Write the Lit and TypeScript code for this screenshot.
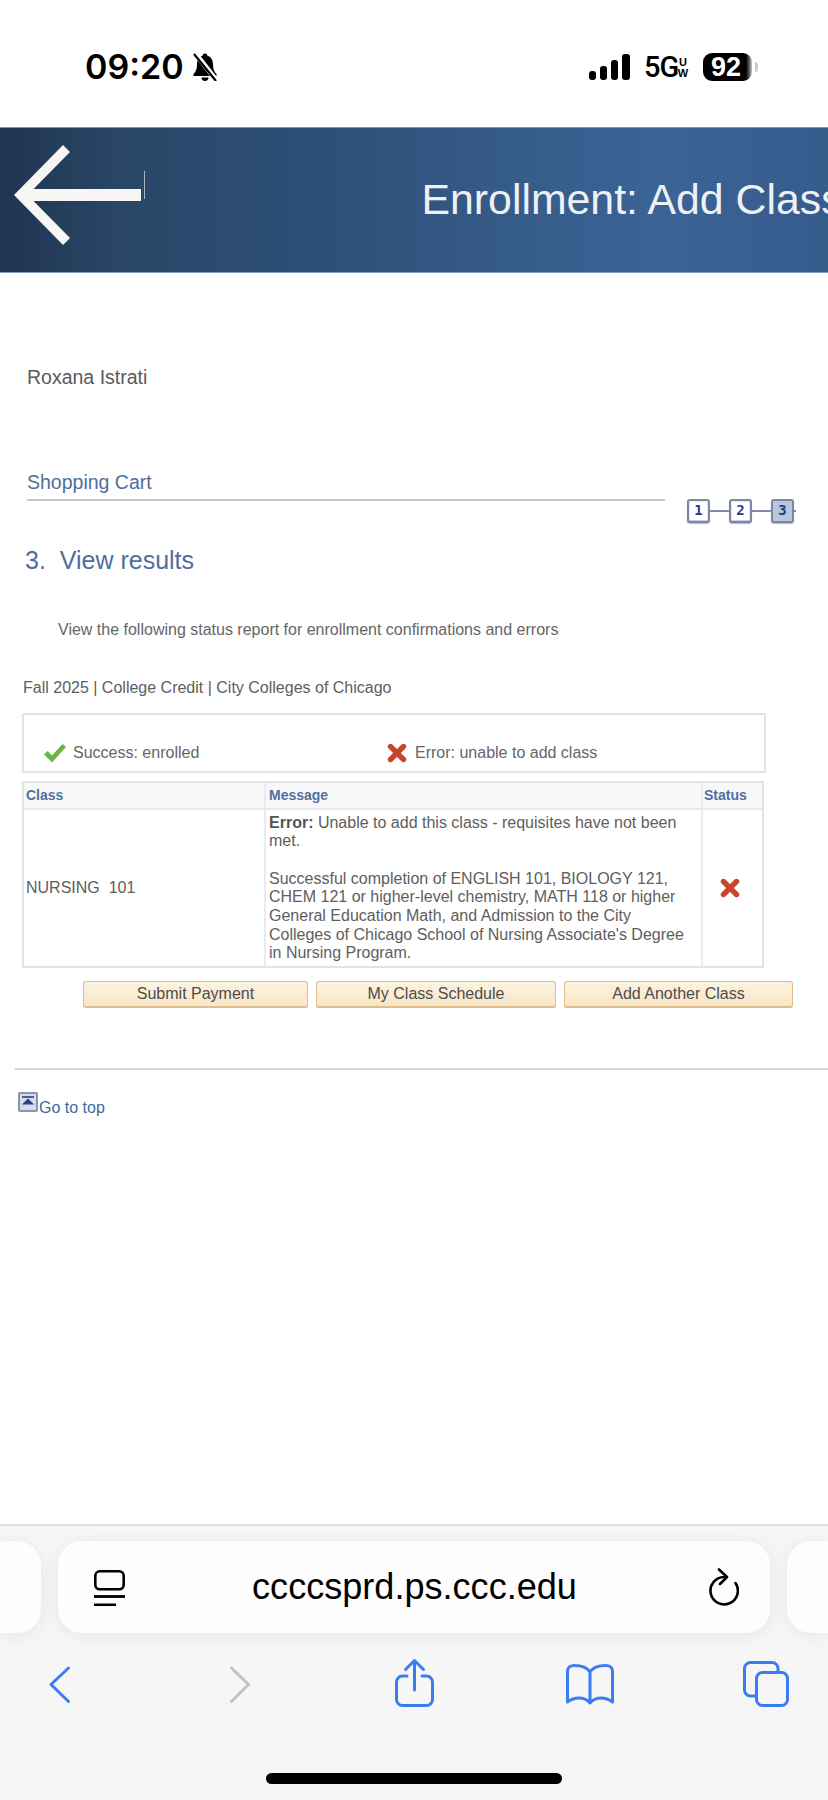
import { LitElement, html, css } from "lit";
import { customElement } from "lit/decorators.js";

const cross = html`<svg class="x" viewBox="0 0 20 20"><path d="M3.5 3.5 16.5 16.5M16.5 3.5 3.5 16.5" fill="none" stroke="#c8452e" stroke-width="5.4" stroke-linecap="round"/></svg>`;

@customElement("app-root")
export class AppRoot extends LitElement {
  static styles = css`
    :host { display: block; }
    * { box-sizing: border-box; }
    .page { width: 828px; height: 1800px; display: flex; flex-direction: column; overflow: hidden; background: #fff; font-family: "Liberation Sans", Arial, sans-serif; color: #555; }

    .status { height: 127px; flex: none; display: flex; align-items: flex-start; padding: 53px 0 0 85px; color: #000; }
    .time { font-family: Inter, sans-serif; font-weight: 600; font-size: 34px; line-height: 28px; width: 106px; }
    .bell { width: 28px; height: 28px; }
    .signal { width: 41px; height: 26px; margin: 1px 0 0 370px; }
    .net { margin-left: 14px; display: flex; height: 28px; }
    .fiveg { font-family: Roboto, sans-serif; font-weight: 500; font-size: 29px; line-height: 29px; letter-spacing: -1px; width: 33px; white-space: nowrap; }
    .uw { display: flex; flex-direction: column; font-weight: 700; font-size: 11px; line-height: 11px; padding: 4px 0 0 1px; width: 11px; align-items: center; }
    .batt { margin-left: 15px; width: 49px; height: 28px; background: linear-gradient(90deg, #000 88%, #666 95%, #ccc 100%); border-radius: 9px; color: #fff; font-weight: 700; font-size: 27px; line-height: 28px; text-align: center; padding-right: 3px; }
    .cap { width: 3px; height: 10px; margin: 9px 0 0 3px; background: #ccc; border-radius: 0 3px 3px 0; }

    .band { height: 146px; flex: none; display: flex; overflow: hidden; white-space: nowrap; background: linear-gradient(90deg, #1f3550 0, #294666 120px, #2c4e75 300px, #375d8b 540px, #3b6395 660px, #365c8c 828px); border-top: 1px solid #7f95b3; border-bottom: 1px solid #7f9cc4; padding-left: 14px; }
    .arrow { flex: none; width: 131px; height: 100px; margin-top: 17px; }
    .band h1 { margin: 0 0 0 276.500px; font-weight: 400; font-size: 42.800px; line-height: 48px; padding-top: 47px; color: #edf1f6; }

    .name { margin: 92px 0 0 27px; height: 24px; font-size: 19.500px; line-height: 24px; color: #5a5a5a; }
    .sect { margin: 81px 0 0 27px; display: flex; align-items: flex-start; }
    .sect-title { width: 638px; height: 31px; border-bottom: 2px solid #c8c8ca; font-size: 19.500px; line-height: 24px; color: #4f6e9d; }
    .steps { margin: 29px 0 0 22px; display: flex; align-items: center; }
    .step { width: 23px; height: 24px; border: 2px solid #7c86a9; border-radius: 3px; background: #fff; color: #2c3b80; font: 700 14px/19px "DejaVu Sans Mono", monospace; text-align: center; box-shadow: inset 0 -1px 0 #c9cfe0, inset 0 0 0 1px #e6e9f2, 0 1px 1px #b4bacd; }
    .step.on { background: #b7c7dc; box-shadow: 0 1px 1px #b4bacd; }
    .link { width: 19px; height: 2px; background: #7f89ab; }
    .link.end { width: 2px; }
    h2 { margin: 22px 0 0 25px; height: 30px; font-weight: 400; font-size: 25px; line-height: 30px; color: #4f6e9d; white-space: pre; }
    .desc { margin: 45px 0 0 58px; height: 20px; font-size: 16px; line-height: 20px; color: #666; }
    .term { margin: 38px 0 0 23px; height: 20px; font-size: 16px; line-height: 20px; color: #5e5e5e; }

    .legend { margin: 15px 0 0 22px; width: 744px; height: 60px; border: 2px solid #e0e3ea; display: flex; align-items: flex-end; padding: 0 0 8px 20px; font-size: 16px; line-height: 20px; color: #666; }
    .legend .item { display: flex; align-items: center; gap: 7px; }
    .legend .item:first-child { width: 343px; }
    .legend .item + .item { gap: 8px; }
    .check { width: 22px; height: 20px; flex: none; }
    .x { width: 20px; height: 20px; flex: none; }

    .tbl { margin: 8px 0 0 22px; width: 742px; height: 187px; border: 2px solid #e0e3ea; display: grid; grid-template-columns: 240px 437px 1fr; grid-template-rows: 27px 1fr; font-size: 16px; color: #5e5e5e; }
    .th { background: #f8f8f9; border-bottom: 2px solid #e6e8ed; font-weight: 700; font-size: 14px; line-height: 25px; color: #51709e; padding-left: 2px; }
    .td { display: flex; align-items: center; padding-left: 2px; white-space: pre; }
    .th + .th, .td + .td { border-left: 2px solid #e9ebf0; padding-left: 3px; }
    .th:nth-child(3) { padding-left: 1px; }
    .msg { display: block; padding: 3.500px 12px 0 3px; white-space: normal; line-height: 18.700px; }
    .msg p { margin: 0 0 18.700px; }
    .msg p:last-child { margin: 0; }
    .msg b { color: #555; }
    .td.st { justify-content: center; padding: 0 5px 1px 0; }

    .btns { margin: 13px 0 0 83px; display: flex; gap: 8px; }
    .btn { height: 27px; border: 1px solid #e0bd8c; border-bottom-width: 2px; border-radius: 3px; background: linear-gradient(180deg, #fbf3e0, #f9e6c6); font-size: 16px; line-height: 23px; text-align: center; color: #4d4d4d; }
    .b1 { width: 225px; } .b2 { width: 240px; } .b3 { width: 229px; }

    .sep { margin: 60px 0 0 15px; height: 2px; background: #d6d6d8; flex: none; }
    .top { margin: 22px 0 0 18px; display: flex; align-items: flex-start; }
    .topic { width: 20px; height: 20px; flex: none; }
    .top span { margin: 7px 0 0 1px; font-size: 16px; line-height: 18px; color: #3c6a9e; }

    .spacer { flex: 1; }
    .bar { flex: none; height: 276px; background: #f6f6f7; border-top: 2px solid #dedede; }
    .pills { margin-top: 15px; height: 92px; display: flex; gap: 17px; }
    .pill { background: #fdfdfd; box-shadow: 0 2px 18px rgba(0,0,0,.07); border-radius: 24px; flex: none; }
    .pl { width: 41px; border-radius: 0 24px 24px 0; }
    .pr { width: 41px; border-radius: 24px 0 0 24px; }
    .main { width: 712px; display: flex; align-items: center; padding: 0 31px 0 36px; color: #000; }
    .reader { width: 31px; height: 36px; flex: none; margin-top: 2px; }
    .url { flex: 1; text-align: center; font-size: 36.100px; line-height: 44px; padding-right: 5px; }
    .reload { width: 30px; height: 38px; flex: none; }
    .nav { margin-top: 26px; display: flex; height: 48px; }
    .nav svg { height: 48px; flex: none; overflow: visible; fill: none; stroke: #3a7df0; stroke-width: 3; stroke-linecap: round; stroke-linejoin: round; }
    .n1 { width: 21px; margin-left: 49px; }
    .n2 { width: 20px; margin-left: 160px; stroke: #c2c2c4 !important; }
    .n3 { width: 39px; margin-left: 145px; }
    .n4 { width: 48px; margin-left: 132px; }
    .n5 { width: 46px; margin-left: 129px; }
    .home { margin: 66px auto 0; width: 296px; height: 11px; border-radius: 6px; background: #000; }
  `;

  render() {
    return html`<div class="page">
      <div class="status">
        <div class="time">09:20</div>
        <svg class="bell" viewBox="0 0 28 28"><path d="M14 0.500c-1.300 0-2.200.9-2.400 2.200C7.500 4 6 7.500 6 11.500c0 4.500-1.200 7.200-3.500 9.500v2h23v-2c-2.300-2.300-3.500-5-3.500-9.500 0-4-1.500-7.500-5.600-8.800C16.200 1.400 15.300 .5 14 .5zM10.500 24.500a3.500 3.500 0 0 0 7 0z" fill="#000"/><path d="M4 0 26 28" stroke="#fff" stroke-width="5"/><path d="M3 1 25 28" stroke="#000" stroke-width="2.200"/></svg>
        <svg class="signal" viewBox="0 0 41 26"><rect x="0" y="17" width="7" height="9" rx="3" /><rect x="11" y="12" width="7" height="14" rx="3"/><rect x="22" y="6" width="7" height="20" rx="3"/><rect x="33" y="0" width="8" height="26" rx="3"/></svg>
        <div class="net"><div class="fiveg">5G</div><div class="uw"><span>U</span><span>W</span></div></div>
        <div class="batt">92</div><div class="cap"></div>
      </div>

      <div class="band">
        <svg class="arrow" viewBox="0 0 131 100"><path d="M0 50 49 0 56 7 19.500 44H127V56H19.500L56 93 49 100Z" fill="#f8f6f5"/><path d="M130.500 26V54" stroke="#aab5c4" stroke-width="1"/></svg>
        <h1>Enrollment: Add Class</h1>
      </div>

      <div class="name">Roxana Istrati</div>
      <div class="sect">
        <div class="sect-title">Shopping Cart</div>
        <div class="steps">
          <div class="step">1</div><div class="link"></div>
          <div class="step">2</div><div class="link"></div>
          <div class="step on">3</div><div class="link end"></div>
        </div>
      </div>
      <h2>3.  View results</h2>
      <div class="desc">View the following status report for enrollment confirmations and errors</div>
      <div class="term">Fall 2025 | College Credit | City Colleges of Chicago</div>

      <div class="legend">
        <div class="item"><svg class="check" viewBox="0 0 22 20"><path d="M0 11.500 3.500 8 8 12.500 18.500 1 22 4 8 19.500Z" fill="#69b546"/></svg>Success: enrolled</div>
        <div class="item">${cross}Error: unable to add class</div>
      </div>

      <div class="tbl">
        <div class="th">Class</div><div class="th">Message</div><div class="th">Status</div>
        <div class="td">NURSING  101</div>
        <div class="td msg">
          <p><b>Error:</b> Unable to add this class - requisites have not been met.</p>
          <p>Successful completion of ENGLISH 101, BIOLOGY 121, CHEM 121 or higher-level chemistry, MATH 118 or higher General Education Math, and Admission to the City Colleges of Chicago School of Nursing Associate's Degree in Nursing Program.</p>
        </div>
        <div class="td st">${cross}</div>
      </div>

      <div class="btns">
        <div class="btn b1">Submit Payment</div>
        <div class="btn b2">My Class Schedule</div>
        <div class="btn b3">Add Another Class</div>
      </div>

      <div class="sep"></div>
      <div class="top">
        <svg class="topic" viewBox="0 0 20 20"><rect x="1" y="1" width="18" height="18" rx="1" fill="#d3dcec" stroke="#8d95ad" stroke-width="2"/><path d="M4 5H16" stroke="#2e3f86" stroke-width="1.600"/><path d="M10 6.500 16 12.500H4Z" fill="#2e3f86"/></svg>
        <span>Go to top</span>
      </div>

      <div class="spacer"></div>

      <div class="bar">
        <div class="pills">
          <div class="pill pl"></div>
          <div class="pill main">
            <svg class="reader" viewBox="0 0 31 36" fill="none" stroke="#000"><rect x="1.300" y="1.300" width="28.400" height="18" rx="4.500" stroke-width="2.600"/><path d="M0 26.500H31" stroke-width="2.800"/><path d="M0 35H22" stroke-width="3"/></svg>
            <div class="url">ccccsprd.ps.ccc.edu</div>
            <svg class="reload" viewBox="0 0 30 38" fill="none" stroke="#000" stroke-width="2.600" stroke-linecap="round" stroke-linejoin="round"><path d="M26.500 15A13.700 13.700 0 1 1 15 9"/><path d="M10 1.500 18 9 11 16"/></svg>
          </div>
          <div class="pill pr"></div>
        </div>
        <div class="nav">
          <svg class="n1" viewBox="0 0 21 48"><path d="M19.500 9 2 25.500 19.500 42.500"/></svg>
          <svg class="n2" viewBox="0 0 20 48"><path d="M1.500 9 18.500 25.500 1.500 42.500"/></svg>
          <svg class="n3" viewBox="0 0 39 48"><path d="M12 17H7.500A6 6 0 0 0 1.500 23V40.500A6 6 0 0 0 7.500 46.500H31.500A6 6 0 0 0 37.500 40.500V23A6 6 0 0 0 31.500 17H27"/><path d="M19.500 31V2M10.500 10.500 19.500 1.500 28.500 10.500"/></svg>
          <svg class="n4" viewBox="0 0 48 48"><path d="M24 13C21 8 15 6.500 8 6.500 4.500 6.500 1.500 8.500 1.500 12V43C8 38 18 37 24 44 30 37 40 38 46.500 43V12C46.500 8.500 43.500 6.500 40 6.500 33 6.500 27 8 24 13ZM24 13V44"/></svg>
          <svg class="n5" viewBox="0 0 46 48"><rect x="13.500" y="13.500" width="31" height="33" rx="6"/><path d="M13.500 37H7.500A6 6 0 0 1 1.500 31V9.500A6 6 0 0 1 7.500 3.500H29A6 6 0 0 1 35 9.500V13"/></svg>
        </div>
        <div class="home"></div>
      </div>
    </div>`;
  }
}
